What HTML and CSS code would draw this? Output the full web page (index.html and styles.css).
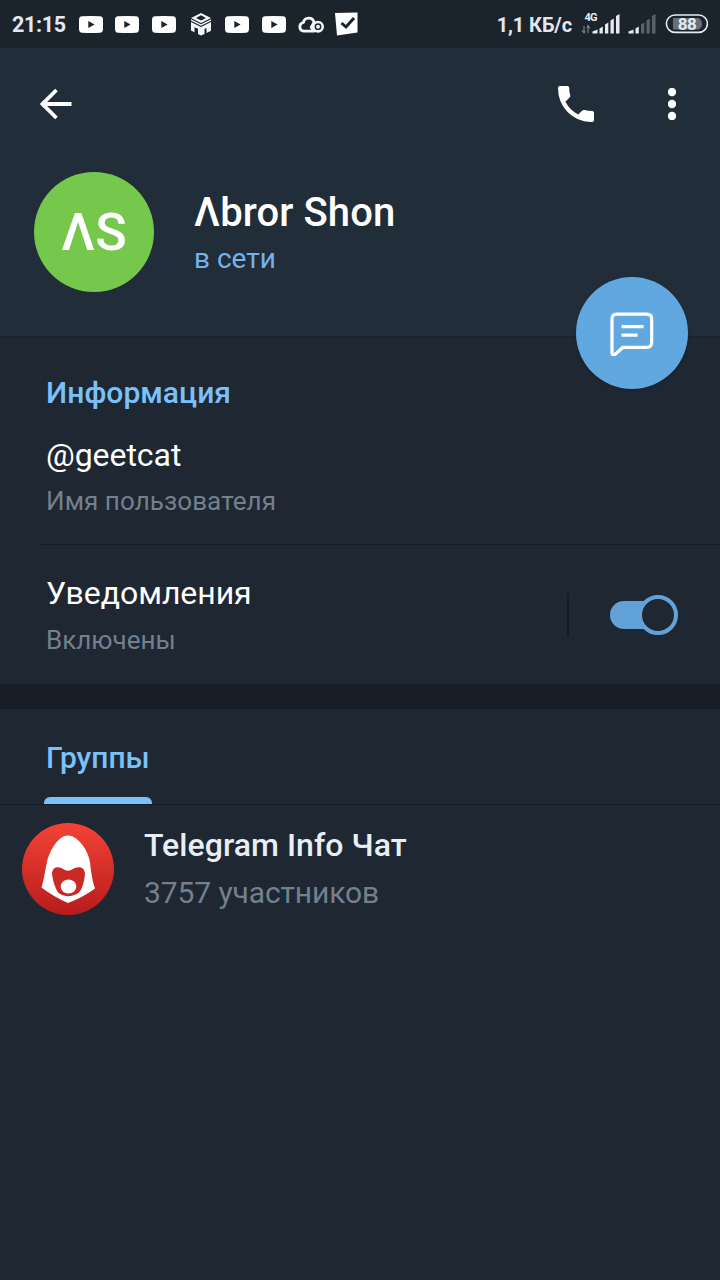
FILE: index.html
```html
<!DOCTYPE html>
<html lang="ru">
<head>
<meta charset="utf-8">
<title>Λbror Shon</title>
<link rel="stylesheet" href="styles.css">
</head>
<body>
<svg width="0" height="0" class="defs">
  <symbol id="video" viewBox="0 0 24 17"><path fill="#fff" fill-rule="evenodd" d="M3 .3Q12-.3 21 .3Q24 .4 24 4V13Q24 16.6 21 16.7Q12 17.3 3 16.7Q0 16.6 0 13V4Q0 .4 3 .3ZM9.3 5V12L15.6 8.5Z"/></symbol>
</svg>
<div class="screen">
  <header class="statusbar">
    <span class="clock">21:15</span>
    <div class="notices">
      <svg width="24" height="17"><use href="#video"/></svg>
      <svg width="24" height="17"><use href="#video"/></svg>
      <svg width="24" height="17"><use href="#video"/></svg>
      <svg class="cube" width="20" height="23" viewBox="0 0 20 23"><path fill="#f4f6f8" fill-rule="evenodd" d="M10 0L20 5L10 10L0 5ZM10 2.200L5 5L10 7.600L15 5Z"/><path fill="#f4f6f8" d="M0 6.300L10 11.300L20 6.300V7.800L10 12.800L0 7.800ZM0 9L10 14V22.500L7 21V15.800L3.500 14.200V19.200L0 17.500ZM10 14L20 9V17.800L15.500 20V15L13.500 16V21L10 22.500Z"/></svg>
      <svg width="24" height="17"><use href="#video"/></svg>
      <svg width="24" height="17"><use href="#video"/></svg>
      <svg class="cloud" width="26" height="18" viewBox="0 0 26 18"><path d="M16 16.200H5.800A4.400 4.400 0 0 1 5.400 7.500A5.400 5.400 0 0 1 16 7.300L13.200 12.500L16 16.200Z" fill="none" stroke="#f4f6f8" stroke-width="2.800" stroke-linejoin="round"/><circle cx="20" cy="11.700" r="4.700" fill="#1b242d" stroke="#f4f6f8" stroke-width="2.600"/><circle cx="20" cy="11.700" r="2" fill="#f4f6f8"/></svg>
      <svg class="check" width="23" height="24" viewBox="0 0 23 24"><path fill="#fff" d="M0 1L22.500 .5V20.500L2 23.500Z"/><path d="M6.500 11L11 15L19 6" fill="none" stroke="#1b242d" stroke-width="3"/></svg>
    </div>
    <div class="network">
      <span class="speed">1,1 КБ/с</span>
      <svg width="127" height="26" viewBox="0 0 127 26">
        <path d="M3 15V21M1 19.500L3 22L4 20M7 22V15M6 17L7 14.500L9 17.500" fill="none" stroke="#76808a" stroke-width="1.200"/>
        <text x="3.500" y="10" class="generation">4G</text>
        <g fill="#e6ebf1"><path d="M11.500 22.500V20.500L16.500 18.500V22.500Z"/><path d="M18.500 22.500V17.500L21.800 15.500V22.500Z"/><path d="M24 22.500V13.500L27.300 11.500V22.500Z"/><path d="M29.500 22.500V9.500L32.800 7.500V22.500Z"/><path d="M35 22.500V5L38.500 3V22.500Z"/><path d="M47.500 22.500V20.500L52.500 18.500V22.500Z"/><path d="M54.500 22.500V17.500L57.800 15.500V22.500Z"/></g>
        <g fill="#59626b"><path d="M60 22.500V13.500L63.300 11.500V22.500Z"/><path d="M65.500 22.500V9.500L68.800 7.500V22.500Z"/><path d="M71 22.500V5L74.500 3V22.500Z"/></g>
        <rect x="85.400" y="4" width="41" height="17.400" rx="8.700" fill="none" stroke="#e6ebf1" stroke-width="1.600"/>
        <path d="M92 7H117Q121 8 121 12.700Q121 17.500 117 18.500H92Z" fill="#66707a"/>
        <text x="106" y="19" class="charge">88</text>
      </svg>
    </div>
  </header>

  <section class="profile">
    <nav class="toolbar">
      <svg class="back" width="32" height="32" viewBox="0 0 32 32"><path d="M31.500 16H3M16.500 2L2.500 16L16.500 30" fill="none" stroke="#fff" stroke-width="3.800"/></svg>
      <svg class="phone" width="36" height="36" viewBox="0 0 36 36"><path fill="#fff" d="M2 0H9.500Q11 0 11.200 1.800Q11.200 6 12.300 9.500Q12.500 10.700 11.500 11.500L7.400 15.800Q11.800 24.200 20.200 28.600L24.300 24.500Q25.200 23.700 26.400 24Q30 25 34.200 25Q36 25.200 36 26.800V34Q36 36 34.200 36Q20 36.300 9.800 26.200Q0 16.500 0 2Q0 0 2 0Z"/></svg>
      <svg class="more" width="8" height="32" viewBox="0 0 8 32"><g fill="#fff"><circle cx="4" cy="4" r="4.200"/><circle cx="4" cy="16" r="4.200"/><circle cx="4" cy="28" r="4.200"/></g></svg>
    </nav>
    <div class="identity">
      <div class="avatar">ΛS</div>
      <div class="who">
        <h1 class="name">Λbror Shon</h1>
        <div class="presence">в сети</div>
      </div>
    </div>
    <div class="message">
      <svg width="44" height="44" viewBox="0 0 44 44"><g fill="none" stroke="#fff" stroke-width="3.200" stroke-linejoin="round" stroke-linecap="round"><path d="M7 2.200H36.500Q41.700 2.200 41.700 7V30.500Q41.700 35.300 36.500 35.300H13L5.500 42Q2 44 2 40.500V7Q2 2.200 7 2.200Z"/><path stroke-linecap="butt" d="M11.500 14.700H33.500M11.500 23.200H27.500"/></g></svg>
    </div>
  </section>

  <section class="info">
    <h2 class="heading">Информация</h2>
    <div class="field">
      <div class="value handle">@geetcat</div>
      <div class="label user">Имя пользователя</div>
    </div>
    <div class="field alerts">
      <div>
        <div class="value notify">Уведомления</div>
        <div class="label state">Включены</div>
      </div>
      <div class="control">
        <svg width="68" height="40" viewBox="0 0 68 40"><rect y="6" width="56" height="28" rx="14" fill="#62a2d8"/><circle cx="48" cy="20" r="18" fill="#1e2732" stroke="#62a2d8" stroke-width="4"/></svg>
      </div>
    </div>
  </section>

  <section class="groups">
    <div class="tabs"><div class="tab"><span>Группы</span></div></div>
    <div class="group">
      <svg width="92" height="92" viewBox="0 0 92 92">
        <defs><linearGradient id="red" x1="0" y1="0" x2="0" y2="1"><stop offset="0" stop-color="#f44336"/><stop offset="1" stop-color="#b71c1c"/></linearGradient></defs>
        <circle cx="46" cy="46" r="46" fill="url(#red)"/>
        <path fill="#fff" d="M46 12.500C55 12.500 66 26 68 39C69 49 70 57 73 65.500Q60 75 46 80Q32 74 19.500 64.500C22 57 23 47 25 39C28 26 37 12.500 46 12.500Z"/>
        <path fill="#c92a26" d="M30 51C30 43 38 43 41 46Q46 49.500 51 46C55 43 63 43 63 51C62 60 60 66 57 69.500Q46 77 36 69.500C33 64 31 59 30 51Z"/>
        <ellipse cx="46.500" cy="63.500" rx="7.800" ry="7" fill="#fff"/>
      </svg>
      <div class="summary">
        <div class="title">Telegram Info Чат</div>
        <div class="members">3757 участников</div>
      </div>
    </div>
  </section>
</div>
</body>
</html>
```

FILE: styles.css
```css
* { box-sizing: border-box; }
body { margin: 0; background: #1e2732; font-family: Roboto, "Noto Sans", sans-serif; color: #fff; }
.defs { display: none; }
.screen { width: 720px; height: 1280px; background: #1e2732; overflow: hidden; white-space: nowrap; }

.statusbar { height: 48px; background: #1b242d; display: flex; align-items: center; padding: 0 12px 0 12px; }
.clock { width: 66.500px; font-size: 21.500px; font-weight: 700; letter-spacing: -.3px; color: #e3e8f0; line-height: 48px; padding-top: 1px; }
.notices { display: flex; align-items: center; gap: 12.700px; }
.notices svg { flex: none; }
.cube { margin: 0 2px; }
.cloud { margin: 0 -1px; }
.network { margin-left: auto; display: flex; align-items: center; gap: 9px; color: #e3e8f0; }
.speed { font-size: 20px; font-weight: 700; letter-spacing: -.1px; line-height: 48px; padding-top: 1px; }
.generation { font-size: 11px; font-weight: 700; letter-spacing: -.8px; fill: #e6ebf1; }
.charge { font-size: 17px; font-weight: 700; letter-spacing: -.5px; fill: #e6ebf1; text-anchor: middle; }

.profile { position: relative; height: 290px; background: #222d3a; border-bottom: 2px solid #1a232d; }
.toolbar { height: 112px; display: flex; align-items: center; padding: 0 44px 0 40px; }
.phone { margin-left: auto; margin-right: 74px; }
.identity { display: flex; padding: 12px 0 0 34px; gap: 40px; }
.avatar { width: 120px; height: 120px; border-radius: 50%; background: #76c84d; font-size: 52px; font-weight: 500; line-height: 121px; text-align: center; }
.who { padding-top: 17px; }
.name { margin: 0; font-size: 40px; font-weight: 500; letter-spacing: .1px; line-height: 48px; }
.presence { font-size: 28px; line-height: 36px; margin-top: 4px; color: #74b2ec; }
.message { position: absolute; left: 576px; top: 229px; width: 112px; height: 112px; border-radius: 50%; background: #62a8e0; display: flex; align-items: center; justify-content: center; padding-top: 2px; box-shadow: 0 1px 3px rgba(0, 0, 0, .15); }

.info { height: 347px; padding: 35px 0 0 40px; border-bottom: 1px solid #1a222c; }
.heading { margin: 0; padding-left: 6px; font-size: 30px; font-weight: 500; letter-spacing: .05px; line-height: 40px; color: #7ac1fa; }
.field { height: 132px; padding: 22px 0 0 6px; border-bottom: 1px solid #141c25; }
.value { font-size: 32px; letter-spacing: -.05px; line-height: 40px; }
.label { font-size: 26px; line-height: 36px; margin-top: 8px; letter-spacing: .08px; color: #74808d; }
.state { letter-spacing: 0; }
.alerts { height: 138px; padding-top: 28px; border: 0; display: flex; justify-content: space-between; }
.state { margin-top: 9px; }
.control { height: 44px; margin-top: 20px; padding: 2px 42px 0 41px; border-left: 2px solid #141c25; }

.groups { border-top: 24px solid #171e26; }
.tabs { height: 96px; padding-left: 44px; border-bottom: 1px solid #141c25; }
.tab { width: 108px; height: 95px; display: flex; flex-direction: column; justify-content: space-between; padding-top: 29px; font-size: 30px; font-weight: 500; line-height: 40px; color: #7ac1fa; }
.tab span { padding-left: 2px; }
.tab::after { content: ""; height: 7px; border-radius: 6px 6px 0 0; background: #7ac1fa; }
.group { display: flex; gap: 30px; padding: 18px 0 0 22px; }
.summary { padding-top: 2px; }
.title { font-size: 32px; font-weight: 500; letter-spacing: .06px; line-height: 40px; color: #e9eef4; }
.members { font-size: 30px; letter-spacing: -.1px; line-height: 38px; margin-top: 9px; color: #74808d; }
```
